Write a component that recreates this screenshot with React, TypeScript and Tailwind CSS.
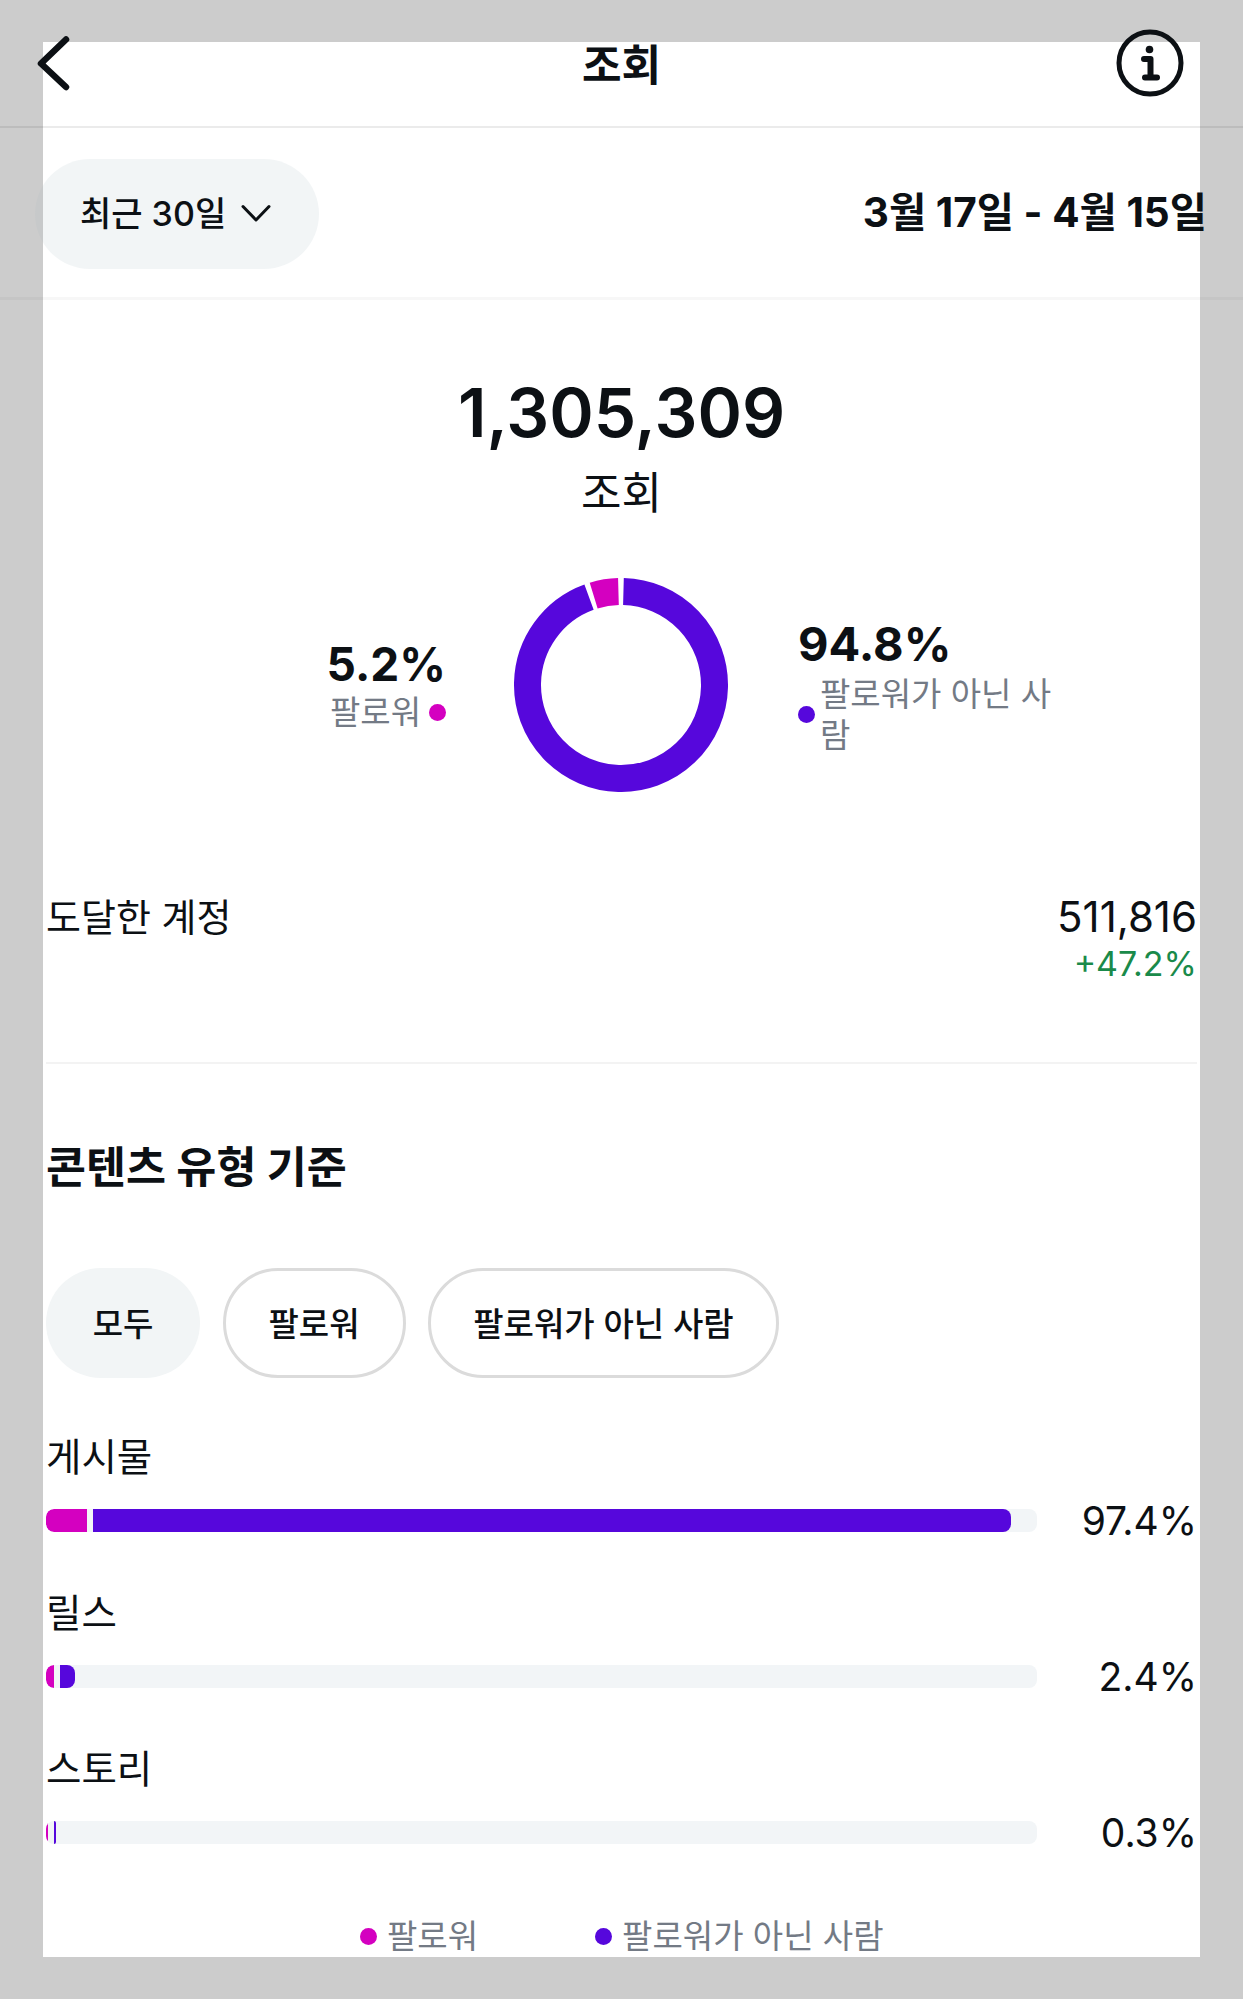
const font = { fontFamily: 'Inter, "Noto Sans CJK KR", sans-serif' };

function BackIcon() {
  return (
    <svg width="36" height="56" viewBox="0 0 36 56" fill="none">
      <path d="M30 3.5 L5 27.5 L30 51" stroke="#0c1014" strokeWidth="6.5" strokeLinecap="round" strokeLinejoin="round" />
    </svg>
  );
}

function InfoIcon() {
  return (
    <svg width="68" height="68" viewBox="0 0 68 68" fill="none">
      <circle cx="34" cy="34" r="31" stroke="#0c1014" strokeWidth="5" />
      <circle cx="33.5" cy="20.5" r="3.8" fill="#0c1014" />
      <path d="M28 30 H34.5 V48 M29 48.5 H41" stroke="#0c1014" strokeWidth="6" strokeLinecap="round" strokeLinejoin="round" />
    </svg>
  );
}

function SmallChevron() {
  return (
    <svg width="30" height="19" viewBox="0 0 30 19" fill="none">
      <path d="M2 2.5 L15 16 L28 2.5" stroke="#0c1014" strokeWidth="3" strokeLinecap="round" strokeLinejoin="round" />
    </svg>
  );
}

function Donut() {
  return (
    <svg width="214" height="214" viewBox="0 0 214 214" fill="none" className="shrink-0">
      <circle
        cx="107"
        cy="107"
        r="93.5"
        stroke="#5607dc"
        strokeWidth="27"
        pathLength={360}
        strokeDasharray="338.5 360"
        transform="rotate(-88.5 107 107)"
      />
      <circle
        cx="107"
        cy="107"
        r="93.5"
        stroke="#d400c0"
        strokeWidth="27"
        pathLength={360}
        strokeDasharray="15.5 360"
        transform="rotate(-107 107 107)"
      />
    </svg>
  );
}

const rows = [
  { label: '게시물', pct: '97.4%', follower: 'w-[41px]', other: 'w-[918px]' },
  { label: '릴스', pct: '2.4%', follower: 'w-[8px]', other: 'w-[15px]' },
  { label: '스토리', pct: '0.3%', follower: 'w-[2px]', other: 'w-[2px]' },
];

export default function App() {
  return (
    <div style={font} className="w-[1243px] h-[1999px] bg-[#cccccc] px-[43px] pt-[42px] overflow-hidden text-[#0c1014]">
      <div className="flow-root w-[1157px] h-[1915px] bg-white">
        {/* top bar, its lines run past the panel */}
        <div className="-mx-[43px] -mt-[12px] h-[98px] px-[36px] grid grid-cols-3 items-start border-b-2 border-black/[0.08]">
          <div className="pt-[6px]">
            <BackIcon />
          </div>
          <div className="text-center text-[43px] font-bold leading-[56px] pt-[7px]">조회</div>
          <div className="flex justify-end -mt-[1px] mr-[23px]">
            <InfoIcon />
          </div>
        </div>

        <div className="-mx-[43px] h-[172px] pl-[35px] pr-[36px] flex items-center justify-between border-b-[3px] border-black/[0.03]">
          <div className="h-[110px] w-[284px] mb-[-2px] pl-[45px] rounded-[55px] bg-[linear-gradient(to_right,#c7c9ca_8px,#f2f5f6_8px)] flex items-center gap-[15px] text-[34px] font-medium">
            <span>최근 30일</span>
            <SmallChevron />
          </div>
          <div className="mt-[2px] text-[40.5px] font-bold whitespace-nowrap">3월 17일 - 4월 15일</div>
        </div>

        <div className="pt-[68px] flex flex-col items-center">
          <div className="text-[67.5px] font-semibold leading-[90px]">1,305,309</div>
          <div className="text-[44px] leading-[60px] mt-[5px]">조회</div>
        </div>

        <div className="mt-[55px] h-[214px] flex items-center">
          <div className="w-[403px] -mt-[2px] flex flex-col items-end">
            <div className="text-[46px] font-bold leading-[56px]">5.2%</div>
            <div className="flex items-center gap-[8px] text-[33px] leading-[40px] text-[#737a85]">
              <span>팔로워</span>
              <span className="w-[17px] h-[17px] rounded-full bg-[#d400c0]" />
            </div>
          </div>
          <div className="ml-[68px]">
            <Donut />
          </div>
          <div className="ml-[70px] mt-[5px] w-[260px]">
            <div className="text-[47px] font-bold leading-[48px]">94.8%</div>
            <div className="mt-[6px] flex items-center gap-[5px] text-[33px] leading-[41px] text-[#737a85]">
              <span className="w-[17px] h-[17px] rounded-full bg-[#5607dc] shrink-0" />
              <span>팔로워가 아닌 사람</span>
            </div>
          </div>
        </div>

        <div className="mt-[100px] px-[3px] flex justify-between">
          <div className="text-[38px] leading-[50px]">도달한 계정</div>
          <div className="text-right">
            <div className="text-[42px] leading-[50px]">511,816</div>
            <div className="text-[34px] leading-[43px] text-[#1a8a4a]">+47.2%</div>
          </div>
        </div>

        <div className="mt-[77px] mx-[3px] border-b-2 border-[#f3f3f3]" />

        <div className="mt-[73px] px-[3px] text-[43.5px] font-bold leading-[60px]">콘텐츠 유형 기준</div>

        <div className="mt-[71px] px-[3px] flex gap-[22.5px] text-[33px] font-medium">
          <div className="h-[110px] w-[154px] pt-[3px] rounded-[55px] bg-[#f2f5f6] flex items-center justify-center">모두</div>
          <div className="h-[110px] w-[183px] pt-[3px] rounded-[55px] border-[3px] border-[#dbdbdb] flex items-center justify-center">팔로워</div>
          <div className="h-[110px] w-[351px] pt-[3px] rounded-[55px] border-[3px] border-[#dbdbdb] flex items-center justify-center">팔로워가 아닌 사람</div>
        </div>

        <div className="mt-[54px] px-[3px] flex flex-col gap-[29px]">
          {rows.map((row) => (
            <div key={row.label} className="h-[127px]">
              <div className="text-[38.5px] leading-[50px]">{row.label}</div>
              <div className="mt-[14px] flex items-center justify-between">
                <div className="w-[991px] h-[23px] rounded-[8px] bg-[#f2f5f7] flex gap-[6px] overflow-hidden">
                  <div className={`${row.follower} h-full bg-[#d400c0] rounded-l-[8px]`} />
                  <div className={`${row.other} h-full bg-[#5607dc] rounded-r-[8px]`} />
                </div>
                <div className="text-[39px] leading-[46px] pt-[2px]">{row.pct}</div>
              </div>
            </div>
          ))}
        </div>

        <div className="mt-[43px] flex items-center pl-[317px] text-[33px] leading-[44px] text-[#737a85]">
          <span className="w-[17px] h-[17px] rounded-full bg-[#d400c0]" />
          <span className="ml-[10px]">팔로워</span>
          <span className="ml-[117px] w-[17px] h-[17px] rounded-full bg-[#5607dc]" />
          <span className="ml-[10px]">팔로워가 아닌 사람</span>
        </div>
      </div>
    </div>
  );
}
